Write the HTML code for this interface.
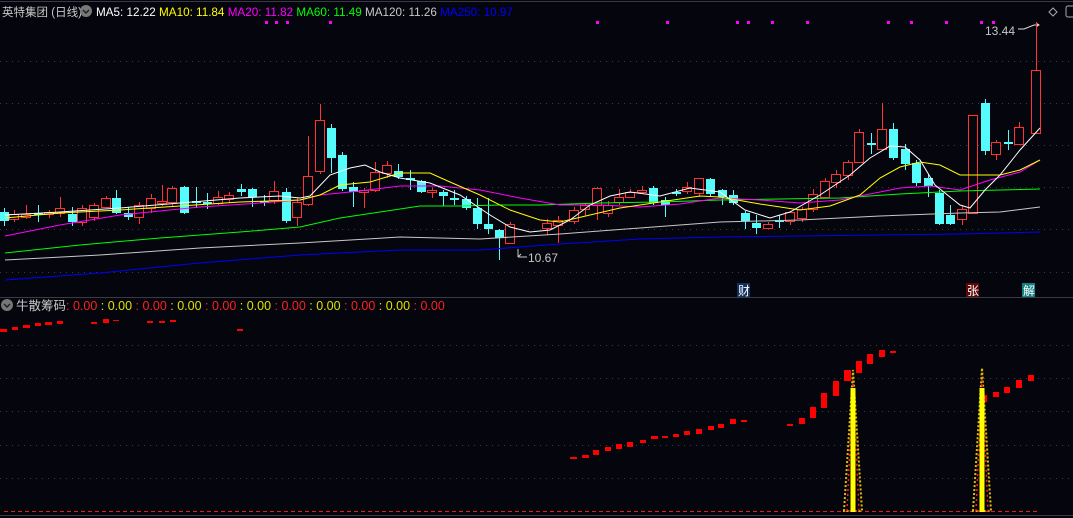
<!DOCTYPE html>
<html><head><meta charset="utf-8">
<style>
html,body{margin:0;padding:0;background:#05050d;width:1073px;height:518px;overflow:hidden}
svg{display:block}
text{font-family:"Liberation Sans","Noto Sans CJK SC",sans-serif}
</style></head><body>
<svg id="s" width="1073" height="518" viewBox="0 0 1073 518" xmlns="http://www.w3.org/2000/svg">
<rect width="1073" height="518" fill="#05050d"/>
<line x1="0" y1="1.5" x2="1073" y2="1.5" stroke="#3a3a44"/>
<g stroke="#3c3c44" stroke-dasharray="1,5">
<line x1="0" y1="61.5" x2="1073" y2="61.5"/><line x1="0" y1="103.5" x2="1073" y2="103.5"/>
<line x1="0" y1="145.5" x2="1073" y2="145.5"/><line x1="0" y1="187.5" x2="1073" y2="187.5"/>
<line x1="0" y1="229.5" x2="1073" y2="229.5"/><line x1="0" y1="272.5" x2="1073" y2="272.5"/>
<line x1="0" y1="345.5" x2="1073" y2="345.5"/><line x1="0" y1="378.5" x2="1073" y2="378.5"/>
<line x1="0" y1="411.5" x2="1073" y2="411.5"/><line x1="0" y1="445.5" x2="1073" y2="445.5"/>
<line x1="0" y1="478.5" x2="1073" y2="478.5"/>
</g>
<line x1="0" y1="297.5" x2="1073" y2="297.5" stroke="#3a3a44"/>
<line x1="0" y1="515.5" x2="1073" y2="515.5" stroke="#3a3a44"/>
<line x1="4" y1="511.5" x2="1040" y2="511.5" stroke="#e02020" stroke-dasharray="4,3"/>
<text x="2" y="16" font-size="11.5" fill="#c8c8c8" textLength="80" lengthAdjust="spacingAndGlyphs">英特集团 (日线)</text>
<circle cx="86" cy="11" r="6" fill="#777"/><path d="M83 10l3 3 3-3" stroke="#222" fill="none" stroke-width="1.5"/>
<text x="96" y="16" font-size="11.7"><tspan fill="#fff">MA5: 12.22 </tspan><tspan fill="#ffff00">MA10: 11.84 </tspan><tspan fill="#ff00ff">MA20: 11.82 </tspan><tspan fill="#00ff00">MA60: 11.49 </tspan><tspan fill="#c8c8c8">MA120: 11.26 </tspan><tspan fill="#0000ff">MA250: 10.97</tspan></text>
<path d="M1053 8l4 4-4 4-4-4z" stroke="#aaa" fill="none"/>
<rect x="1066" y="6" width="10" height="11" rx="2" stroke="#aaa" fill="none"/>
<text x="985" y="35" font-size="12" fill="#c8c8c8">13.44</text>
<path d="M1018 29h6l10-4h5M1036 23l3 2-3 2" stroke="#ddd" fill="none"/>
<text x="528" y="262" font-size="12" fill="#c8c8c8">10.67</text>
<path d="M518 257h9M518 257l3-3M518 257v-8" stroke="#ccc" fill="none"/>
<g id="c"></g>
<g fill="none" stroke-width="1">
<polyline stroke="#0000ff" points="5,280 100,273 200,263 300,255 400,250 480,250 560,244 640,239 720,237 800,236 880,235 960,234 1040,232"/>
<polyline stroke="#c8c8c8" points="5,260 100,255 200,248 300,243 400,237 480,239 560,234 640,228 720,222 800,220 880,216 960,213 1000,212 1040,207"/>
<polyline stroke="#00ff00" points="5,253 80,245 160,238 240,232 300,227 340,218 380,212 420,206 460,206 500,205 540,205 600,203 660,202 720,200 780,199 840,198 900,194 960,191 1000,190 1040,189"/>
<polyline stroke="#ff00ff" points="5,236 60,225 120,215 200,207 260,203 300,200 320,195 360,191 400,186 440,186 480,190 520,198 560,205 600,205 640,207 680,204 720,198 760,200 800,203 840,200 880,192 900,188 930,186 960,190 990,180 1020,172 1040,160"/>
<polyline stroke="#ffff00" points="5,218 60,213 120,210 180,206 240,202 300,200 320,195 340,185 370,182 400,173 430,173 450,182 480,195 510,210 540,220 560,222 590,215 620,208 660,202 700,196 720,197 760,204 800,210 830,206 860,195 880,178 900,167 920,162 940,165 960,175 980,175 1000,175 1020,170 1040,160"/>
<polyline stroke="#ffffff" points="5,215 60,212 120,208 180,203 240,198 280,196 300,198 310,196 330,175 350,168 365,165 380,172 400,178 430,183 460,195 490,215 510,227 530,232 550,230 570,220 590,205 610,196 630,192 660,196 690,188 720,192 745,210 770,218 790,212 820,195 850,175 870,158 890,146 905,147 920,160 935,185 960,205 970,208 985,190 1000,175 1020,150 1040,128"/>
</g>
<g id="d" fill="#ff00ff"></g>
<rect x="737" y="283" width="13" height="14" fill="#103060"/><text x="738" y="295" font-size="12" fill="#fff">财</text>
<rect x="966" y="283" width="13" height="14" fill="#600808"/><text x="967" y="295" font-size="12" fill="#fff">张</text>
<rect x="1022" y="283" width="13" height="14" fill="#108080"/><text x="1023" y="295" font-size="12" fill="#fff">解</text>
<circle cx="7" cy="305" r="6" fill="#777"/><path d="M4 304l3 3 3-3" stroke="#222" fill="none" stroke-width="1.5"/>
<text x="16" y="310" font-size="12.5" fill="#c8c8c8">牛散筹码</text>
<text x="66" y="310" font-size="12.5"><tspan fill="#ff2020"> : 0.00 </tspan><tspan fill="#e0e000">: 0.00 </tspan><tspan fill="#ff2020">: 0.00 </tspan><tspan fill="#e0e000">: 0.00 </tspan><tspan fill="#ff2020">: 0.00 </tspan><tspan fill="#e0e000">: 0.00 </tspan><tspan fill="#ff2020">: 0.00 </tspan><tspan fill="#e0e000">: 0.00 </tspan><tspan fill="#ff2020">: 0.00 </tspan><tspan fill="#e0e000">: 0.00 </tspan><tspan fill="#ff2020">: 0.00</tspan></text>
<g id="b" fill="#ff0000"></g>
<g id="sp"></g>
</svg>
<script>
var NS="http://www.w3.org/2000/svg";
function el(p,t,a){var e=document.createElementNS(NS,t);for(var k in a)e.setAttribute(k,a[k]);document.getElementById(p).appendChild(e);return e;}
var C=[[4,212,221,208,226,0],[14,214,219,210,222,1],[26,214,217,205,219,1],[38,213,215,205,222,0],[49,212,214,210,218,1],[60,208,213,197,217,1],[72,214,222,207,226,0],[82,208,222,205,226,1],[94,205,217,203,221,1],[106,198,207,196,208,1],[116,198,213,190,214,0],[128,213,217,207,220,0],[139,205,217,202,224,1],[151,198,208,194,213,1],[162,201,203,185,206,1],[172,188,202,186,206,1],[184,187,213,186,214,0],[196,201,203,187,208,0],[207,202,204,193,209,0],[218,197,203,191,205,1],[229,195,199,192,203,1],[241,189,192,184,196,0],[252,189,197,188,207,0],[264,201,203,195,206,0],[274,191,200,181,204,1],[286,192,221,188,223,0],[297,202,217,198,226,1],[308,176,204,136,206,1],[320,120,171,104,174,1],[331,128,158,124,173,0],[342,155,189,152,191,0],[353,187,192,182,207,0],[364,190,192,188,208,1],[375,172,190,162,192,1],[387,165,173,161,178,1],[398,171,177,164,179,0],[410,178,180,170,190,0],[421,181,192,180,193,0],[432,190,192,188,198,1],[443,192,196,190,206,0],[454,198,200,190,205,0],[466,199,208,196,210,0],[477,208,224,198,229,0],[488,224,229,198,234,0],[499,230,238,229,260,0],[510,224,243,222,244,1],
[547,223,228,219,235,1],[558,220,225,216,243,1],[574,210,221,207,224,1],[585,205,209,203,216,1],[597,188,205,187,220,1],[608,205,213,201,217,1],[619,197,202,189,205,1],[630,192,197,189,198,1],[642,190,192,186,193,1],[653,188,203,186,205,0],[665,200,205,197,217,0],[676,192,194,189,196,0],[687,187,191,182,194,1],[699,178,193,178,197,1],[710,179,194,178,197,0],[722,190,197,189,205,0],[733,195,203,190,205,0],[745,213,221,211,229,0],[756,223,228,215,234,0],[768,224,228,222,229,1],[779,220,222,215,228,0],[790,212,221,211,225,1],[802,209,218,207,222,1],[813,194,209,189,212,1],[825,181,197,178,198,1],[836,174,182,170,188,1],[848,162,175,160,180,1],[859,132,162,129,163,1],[871,143,145,133,154,0],[882,129,149,103,151,1],[893,129,158,123,160,0],[905,149,164,144,170,0],[916,163,183,160,186,0],[928,178,186,174,197,0],[939,193,224,190,225,0],[950,215,224,205,225,0],[962,209,219,206,225,1],[973,115,213,115,213,1],[985,103,151,99,155,0],[996,142,154,140,160,1],[1008,142,144,130,150,0],[1019,127,144,122,145,1],[1036,70,133,22,134,1]];
C.forEach(function(c){var x=c[0];
 if(c[5]){el("c","line",{x1:x+.5,y1:c[3],x2:x+.5,y2:c[4],stroke:"#ff3232"});el("c","rect",{x:x-4.5,y:c[1]+.5,width:9,height:Math.max(c[2]-c[1],1),fill:"#05050d",stroke:"#ff3232"});}
 else{el("c","line",{x1:x+.5,y1:c[3],x2:x+.5,y2:c[4],stroke:"#54fcfc"});el("c","rect",{x:x-4,y:c[1],width:9,height:Math.max(c[2]-c[1],2),fill:"#54fcfc"});}
});
[265,275,286,329,596,666,736,747,771,806,887,910,945,980,992].forEach(function(x){el("d","rect",{x:x,y:21,width:3,height:3});});
var B=[[0,329,7,3],[12,327,6,3],[23,325,7,3],[35,323,6,3],[45,322,7,3],[57,321,6,3],[91,322,6,2],[103,319,6,4],[113,320,6,1],[147,321,6,2],[159,321,6,2],[170,320,6,2],[237,329,6,2],
[570,457,7,2],[582,455,7,3],[593,450,6,5],[605,447,6,4],[616,444,6,5],[627,442,6,5],[640,440,6,3],[651,436,7,3],[662,436,6,2],[673,434,6,3],[684,431,6,4],[696,429,6,5],[708,426,6,4],[718,424,6,4],[730,419,6,5],[741,420,6,2],[787,424,6,2],[799,418,6,6],[810,407,6,11],[821,393,6,15],[833,381,6,15],[844,370,7,11],[856,361,6,12],[867,354,6,10],[879,350,6,7],[890,351,6,2],[981,395,6,7],[993,392,6,5],[1004,387,6,6],[1016,380,6,8],[1028,375,6,6]];
B.forEach(function(b){el("b","rect",{x:b[0],y:b[1],width:b[2],height:b[3]});});
function spike(cx,top){
 el("sp","polygon",{points:(cx-9)+",511 "+cx+","+top+" "+(cx+9)+",511",fill:"none",stroke:"#e0c000","stroke-width":2,"stroke-dasharray":"2,2"});
 el("sp","polygon",{points:(cx-6)+",511 "+cx+","+(top+10)+" "+(cx+6)+",511",fill:"none",stroke:"#ff2020","stroke-width":1.5,"stroke-dasharray":"2,3"});
 el("sp","rect",{x:cx-2.5,y:388,width:5,height:124,fill:"#ffff00"});
}
spike(853,370);spike(982,368);
</script>
</body></html>
